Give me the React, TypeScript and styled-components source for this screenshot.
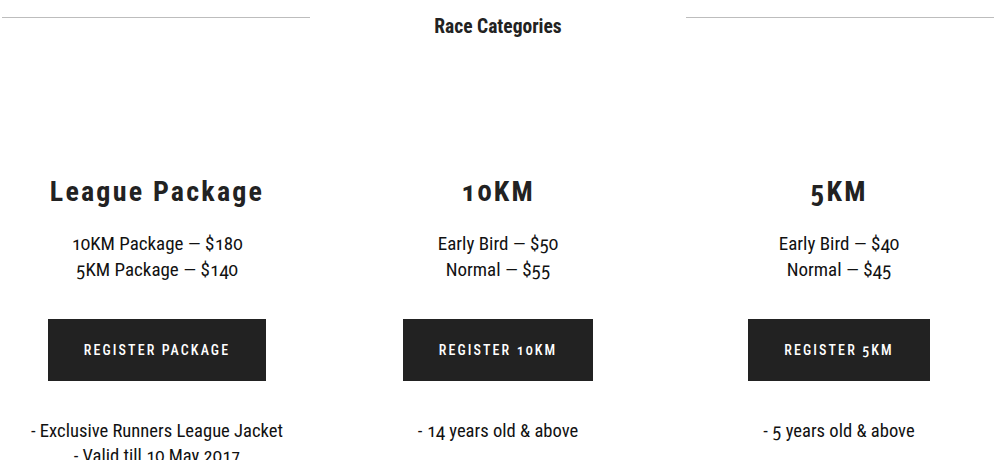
import React from "react";
import styled, { createGlobalStyle } from "styled-components";

const GlobalStyle = createGlobalStyle`
  html, body { margin: 0; padding: 0; background: #fff; }
  body {
    font-family: "Roboto Condensed", "Liberation Sans Narrow", sans-serif;
    font-variant-numeric: oldstyle-nums;
    color: #111;
  }
`;

const Page = styled.div`
  width: 996px;
`;

const Header = styled.header`
  display: grid;
  grid-template-columns: 1fr 376px 1fr;
  align-items: start;
  padding: 0 2px;
`;

const Rule = styled.div`
  height: 1px;
  margin-top: 17px;
  background: #bdbdbd;
`;

const Title = styled.h2`
  margin: 0;
  padding-top: 17px;
  font-size: 19.5px;
  line-height: 20px;
  font-weight: 700;
  text-align: center;
  color: #222;
`;

const Columns = styled.section`
  display: grid;
  grid-template-columns: repeat(3, 314px);
  column-gap: 27px;
  margin-top: 138px;
`;

const Card = styled.article`
  display: flex;
  flex-direction: column;
  align-items: center;
  text-align: center;
`;

const Heading = styled.h3`
  margin: 0;
  font-size: 28px;
  line-height: 34px;
  font-weight: 700;
  letter-spacing: 2.2px;
  color: #222;
`;

const Prices = styled.div`
  margin-top: 22px;
  font-size: 19px;
  line-height: 26px;
`;

const Button = styled.a`
  display: inline-flex;
  align-items: center;
  justify-content: center;
  margin-top: 36px;
  height: 62px;
  padding: 0 36px;
  background: #222;
  color: #fff;
  font-size: 14px;
  font-weight: 500;
  letter-spacing: 2.1px;
  text-transform: uppercase;
  text-decoration: none;
`;

const Notes = styled.ul`
  list-style: none;
  margin: 38px 0 0;
  padding: 0;
  font-size: 18.6px;
  line-height: 25px;
`;

const cards = [
  {
    title: "League Package",
    prices: ["10KM Package — $180", "5KM Package — $140"],
    button: "Register Package",
    notes: ["- Exclusive Runners League Jacket", "- Valid till 10 May 2017"],
  },
  {
    title: "10KM",
    prices: ["Early Bird — $50", "Normal — $55"],
    button: "Register 10KM",
    notes: ["- 14 years old & above"],
  },
  {
    title: "5KM",
    prices: ["Early Bird — $40", "Normal — $45"],
    button: "Register 5KM",
    notes: ["- 5 years old & above"],
  },
];

export default function App() {
  return (
    <>
      <GlobalStyle />
      <Page>
        <Header>
          <Rule />
          <Title>Race Categories</Title>
          <Rule />
        </Header>
        <Columns>
          {cards.map((c) => (
            <Card key={c.title}>
              <Heading>{c.title}</Heading>
              <Prices>
                {c.prices.map((p) => (
                  <div key={p}>{p}</div>
                ))}
              </Prices>
              <Button href="#">{c.button}</Button>
              <Notes>
                {c.notes.map((n) => (
                  <li key={n}>{n}</li>
                ))}
              </Notes>
            </Card>
          ))}
        </Columns>
      </Page>
    </>
  );
}
